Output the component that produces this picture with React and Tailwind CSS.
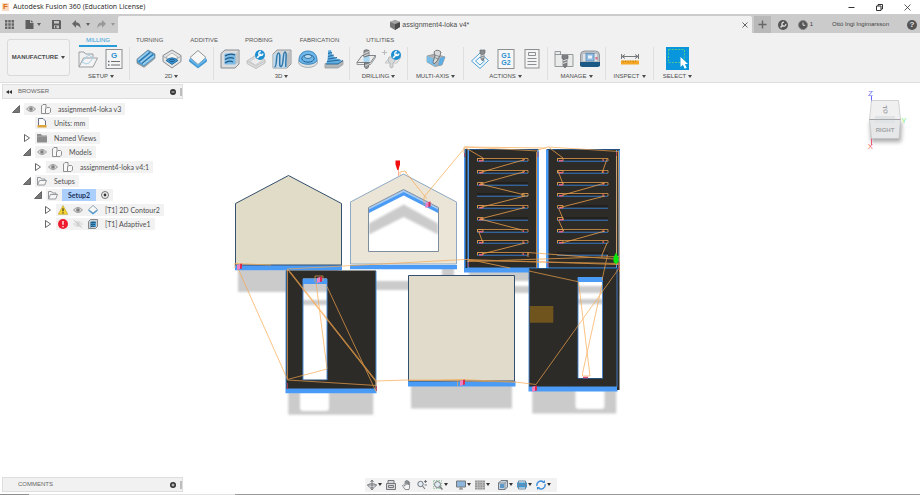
import React from "react";

const BLUE = "#4a9bf5";
const INK = "#75797d";
const ACC = "#3f97d3";

function Svg({ size = 20, box = 20, className = "", children }) {
  return (
    <svg width={size} height={size} viewBox={`0 0 ${box} ${box}`} fill="none" className={`shrink-0 ${className}`} aria-hidden="true">
      {children}
    </svg>
  );
}

function Caret() {
  return (
    <svg width="4" height="3" viewBox="0 0 4 3" className="shrink-0" aria-hidden="true">
      <path d="M0 0h4L2 3z" fill="currentColor" />
    </svg>
  );
}

/* ---------- ribbon icons ---------- */

const SetupFolder = () => (
  <Svg>
    <path d="M1 18V3h5l1.500 2H15v3" stroke="#9b9fa2" strokeWidth="1" />
    <path d="M1 18L5.500 9H19.500L15 18z" fill="#f4f4f4" stroke="#9b9fa2" />
    <path d="M4 13l4-5 3-2 4 3-4 5-3 1z" stroke="#a9cfe8" />
  </Svg>
);
const GSheet = () => (
  <Svg>
    <rect x="2" y="0.500" width="16" height="19" fill="#f5f5f5" stroke="#8b8e91" />
    <text x="10" y="8.500" textAnchor="middle" fontSize="8" fontWeight="700" fontFamily="Liberation Sans, sans-serif" fill="#2e8fd0">G</text>
    <path d="M7 12.500h9M7 16h9" stroke="#6c6f72" strokeWidth="1.200" />
    <path d="M4 12.500h1.500M4 16h1.500" stroke="#6c6f72" strokeWidth="1.500" />
  </Svg>
);
const Face2D = () => (
  <Svg>
    <path d="M1 10L12 1l7 4v4L8 18l-7-4z" fill="#4a9bd2" stroke="#6d7c87" strokeWidth=".7" />
    <path d="M2 11L12.500 2.500M4.500 13.500L15.500 4.500M7 15.500L18 7" stroke="#9fd0f0" strokeWidth="1.600" />
    <path d="M1 14l7 4 11-9" stroke="#9aa0a4" strokeWidth="1.200" />
    <path d="M3 12.500L14 3.500M6 14.500L17 5.500" stroke="#1f5f90" strokeWidth=".8" />
  </Svg>
);
const Pocket2D = () => (
  <Svg>
    <path d="M10 1l9 5.500v6L10 19l-9-6.500v-6z" fill="#e3e4e5" stroke="#8a8d90" />
    <path d="M1 7l9 6 9-6" stroke="#9c9fa2" strokeWidth=".8" />
    <path d="M10 4l6 4-6 4.500L4 8z" fill="#f5f5f5" stroke="#9c9fa2" strokeWidth=".7" />
    <path d="M4 11.500q6-5.500 12 0l-6 4z" fill="#3b93d3" stroke="#1d6498" strokeWidth=".8" />
    <ellipse cx="10" cy="11.500" rx="2.500" ry="1.200" stroke="#164f7b" strokeWidth=".8" />
  </Svg>
);
const Contour2D = () => (
  <Svg>
    <path d="M1.500 10.500L10 17.500l8.500-7v2L10 19l-8.500-6.500z" fill="#3f9ddd" stroke="#2c87c6" strokeWidth=".6" />
    <path d="M10 1.500l8 7L10 15.500l-8-7z" fill="#f7f7f7" stroke="#85898c" strokeWidth=".9" />
    <path d="M2 9.500l8 7 8-7" stroke="#5eb3ea" strokeWidth="1.500" />
  </Svg>
);
const Adaptive3D = () => (
  <Svg>
    <path d="M1 4.500L5 1h14v14l-4 4H1z" fill="#dcdddf" stroke="#888c8f" />
    <rect x="4.500" y="4.500" width="11.500" height="11" rx="1" fill="#7bbbe8" />
    <path d="M5 7q5-3 10-1M5 10.500q5-3 9-1M5 14q4-3 8-1" stroke="#215b85" strokeWidth="1.200" />
    <path d="M15.500 5v10.500l3-2.500V2z" fill="#c4c6c8" />
  </Svg>
);
function Wrench({ cx, cy }) {
  return (
    <g>
      <circle cx={cx} cy={cy} r="5" fill="#1c8fd0" />
      <path d={`M${cx - 2.500} ${cy + 2.500}l3.200-3.200`} stroke="#fff" strokeWidth="1.600" strokeLinecap="round" />
      <path d={`M${cx + 2.800} ${cy - 1.500}a2 2 0 1 1 -2-2`} stroke="#fff" strokeWidth="1.300" />
    </g>
  );
}
const Pocket3D = () => (
  <Svg>
    <path d="M1 12l9-6 9 5v3l-9 5.500-9-5z" fill="#dedede" stroke="#bcbec0" />
    <path d="M3.500 12.500l7-4.500 6 3.500-7 4.500z" fill="#ececec" stroke="#c3c5c7" strokeWidth=".8" />
    <path d="M1 12l9 5 9-5" stroke="#c3c5c7" />
    <Wrench cx={14} cy={6} />
  </Svg>
);
const Parallel3D = () => (
  <Svg>
    <path d="M1 5l4-4h14v14l-4 4H1z" fill="#d4d6d7" stroke="#95989b" />
    <path d="M1 5h14v14H1z" fill="#b9daf1" opacity=".7" />
    <path d="M2.500 18c3 0 1-14 4-14s-.5 14 2.500 13.500S10.500 3 13 3s0 13 1 15" stroke="#2f78ad" strokeWidth="1.500" />
    <path d="M15 5l3.500-3.500v13L15 18z" fill="#bcbfc1" />
  </Svg>
);
const Scallop3D = () => (
  <Svg>
    <ellipse cx="10" cy="13" rx="9.500" ry="5.500" fill="#dfe1e2" stroke="#9fa3a6" strokeWidth=".8" />
    <path d="M1 11.500C1 5 5 2 10 2s9 3 9 9.500c-2 5-16 5-18 0z" fill="#6fb7ea" stroke="#2f7fb6" strokeWidth=".9" />
    <ellipse cx="10" cy="9.500" rx="6.200" ry="3.700" stroke="#205f8d" strokeWidth="1" />
    <ellipse cx="10" cy="7.500" rx="3.600" ry="2" fill="#b9dcf3" stroke="#205f8d" strokeWidth=".8" />
  </Svg>
);
const Contour3D = () => (
  <Svg>
    <path d="M1 14.500h13l5-3v4l-5 3.500H1z" fill="#b5b8ba" stroke="#8f9396" strokeWidth=".7" />
    <path d="M4 1.500l3-.5c1 6 4 9 11 10l-4 4H2C4 11 4 6 4 1.500z" fill="#5daee5" />
    <path d="M4 4.500l4-1M4 7.500l6-1.500M4 10l9-1.500M3 12.500l13-1.500M2 15h12l5-3.500" stroke="#245f8b" strokeWidth=".9" />
  </Svg>
);
const DrillIcon = () => (
  <Svg>
    <path d="M1 13.500L6 6.500h13.500l-5 7z" fill="#ececec" stroke="#7f8386" />
    <path d="M1 13.500v2h13.500l5-7v-2" stroke="#7f8386" strokeWidth=".8" />
    <rect x="7.500" y="7" width="6" height="6" fill="#a7d5f2" />
    <path d="M8 1.500q2.500-1.500 5 0v5l-5 1.500zM8.500 14h4.500l-.5 4-2 2-2-2z" fill="#8f9395" stroke="#5f6366" strokeWidth=".8" />
    <path d="M8 4.500l5-2M8 7l5-2M9 17l4-2" stroke="#d9dadb" />
  </Svg>
);
const DrillProbe = () => (
  <Svg>
    <path d="M3 14L8 8h11l-4 6z" fill="#e5e6e6" stroke="#c3c5c6" />
    <path d="M7 8l6 1v3l-2 2v4l-2 1-1-1v-4l-2-2z" fill="#d6d7d8" stroke="#b8babc" />
    <path d="M2.500 1v5M0 3.500h5" stroke="#b8bbbd" />
    <Wrench cx={14} cy={6} />
  </Svg>
);
const MultiAxis = () => (
  <Svg>
    <path d="M1 7l8-2 10 3-3 8-7 1.500L1 13z" fill="#aeb2b5" stroke="#84888b" strokeWidth=".7" />
    <path d="M1 7l7 3 2 7.500L1 13z" fill="#76bdec" />
    <path d="M14 9l5-1.500-3 8-4 1z" fill="#5caee6" />
    <path d="M8 3q3-3.500 7 0l-1 3.500L11 12l-3 3-1-2 2-6z" fill="#d9dadb" stroke="#6b6e71" strokeWidth=".9" />
    <path d="M8.500 6l5 1.500M8.500 8.500l4 1.500" stroke="#75797b" strokeWidth=".8" />
  </Svg>
);
const Simulate = () => (
  <Svg>
    <path d="M1.500 12L10 4l8.500 7.500-8.500 8z" fill="#f2f8fc" stroke="#4f9fd2" />
    <path d="M5.500 12L10 8l4.500 4-4.500 4z" stroke="#4f9fd2" />
    <path d="M10 1h5v3l-1 1v5l-1.500 2L11 10V5l-1-1z" fill="#898d90" stroke="#6a6d70" strokeWidth=".7" />
    <path d="M11 7l3-1M11 9l3-1" stroke="#ddd" strokeWidth=".8" />
  </Svg>
);
const PostProcess = () => (
  <Svg>
    <rect x="2" y=".5" width="16" height="19" fill="#f7f7f7" stroke="#8c8f92" />
    <text x="10" y="9" textAnchor="middle" fontSize="7" fontWeight="700" fontFamily="Liberation Sans, sans-serif" fill="#2e8fd0">G1</text>
    <text x="10" y="16" textAnchor="middle" fontSize="7" fontWeight="700" fontFamily="Liberation Sans, sans-serif" fill="#2e8fd0">G2</text>
  </Svg>
);
const SetupSheet = () => (
  <Svg>
    <rect x="3" y=".5" width="14" height="18.500" fill="#f4f4f4" stroke="#8c8f92" />
    <path d="M6.500 3.500h7v3h-7zM5.500 9.500h9M5.500 12.500h9M5.500 15.500h9" stroke="#8c8f92" />
  </Svg>
);
const ToolLibrary = () => (
  <Svg>
    <path d="M1 17.500v-15h5.500v3H19v12z" fill="#e9eaea" stroke="#95989b" />
    <path d="M1 5.500h6" stroke="#95989b" />
    <path d="M8 6.500h6v3H13v7l-2 2.500-2-2.500v-7H8z" fill="#7b7f82" stroke="#65696b" strokeWidth=".7" />
    <path d="M9 12l4-1.500M9 14.500l4-1.500" stroke="#e4e4e4" />
  </Svg>
);
const Machine = () => (
  <Svg>
    <path d="M.500 14V6q0-4 4-4h11q4 0 4 4v8z" fill="#b9bfc5" stroke="#93999e" />
    <path d="M3 5h14v7H3z" fill="#dfe3e6" />
    <rect x="6" y="4.500" width="8" height="7.500" fill="#8fbbe2" stroke="#5b8ab3" strokeWidth=".8" />
    <rect x="8" y="6.500" width="4" height="3" fill="#e9f2fa" />
    <path d="M15.500 8h2v2.500h-2z" fill="#d66b83" />
    <path d="M0 13h20v4l-2 1H2l-2-1z" fill="#1c5885" />
  </Svg>
);
const Measure = () => (
  <Svg>
    <path d="M1.500 5v5M18.500 5v5M2 7.500h16M5 5.500L2 7.500l3 2M15 5.500l3 2-3 2" stroke="#75797c" />
    <path d="M1 11.500h18v4H1z" fill="#f5a623" />
    <path d="M3 11.500v2M5.500 11.500v1.500M8 11.500v2M10.500 11.500v1.500M13 11.500v2M15.500 11.500v1.500" stroke="#b8780f" strokeWidth=".7" />
  </Svg>
);
const SelectIcon = () => (
  <svg width="23" height="23" viewBox="0 0 23 23" fill="none" className="shrink-0" aria-hidden="true">
    <path d="M0 0h23v23H0z" fill="#0a96dc" />
    <rect x="2.500" y="2.500" width="16" height="13" stroke="#54c98b" strokeDasharray="2 1.300" />
    <path d="M14.500 10v10l2.400-2.200 1.800 4 2-1-1.800-3.800H22z" fill="#fff" />
  </svg>
);

const GROUPS = [
  { label: "SETUP", width: "w-14", icons: [SetupFolder, GSheet] },
  { label: "2D", width: "w-21", icons: [Face2D, Pocket2D, Contour2D] },
  { label: "3D", width: "w-34", icons: [Adaptive3D, Pocket3D, Parallel3D, Scallop3D, Contour3D] },
  { label: "DRILLING", width: "w-[58px]", icons: [DrillIcon, DrillProbe] },
  { label: "MULTI-AXIS", width: "w-14", icons: [MultiAxis] },
  { label: "ACTIONS", width: "w-21", icons: [Simulate, PostProcess, SetupSheet] },
  { label: "MANAGE", width: "w-[58px]", icons: [ToolLibrary, Machine] },
  { label: "INSPECT", width: "w-12", icons: [Measure] },
  { label: "SELECT", width: "w-12", icons: [SelectIcon] },
];
const TABS = ["TURNING", "ADDITIVE", "PROBING", "FABRICATION", "UTILITIES"];

function Ribbon() {
  return (
    <div className="flex shrink-0 border-b border-[#dedede] bg-[#f1f1f1] pl-[7px]">
      <button className="my-[6px] flex h-[37px] w-[63px] shrink-0 items-center justify-center gap-[3px] rounded-[3px] border border-[#d9d9d9] bg-[#f3f3f3] text-[6px] font-bold text-[#4a4a4a]">
        MANUFACTURE <Caret />
      </button>
      <div className="ml-[3px]">
        <div className="flex h-[14px] items-start gap-[27px] pl-[6px] text-[6px] leading-[10px] text-[#585858]">
          <button className="-mr-2 border-b-2 border-[#2a9bd9] px-[7px] pt-[2px] text-[#2a9bd9]">MILLING</button>
          {TABS.map((t) => (
            <button key={t} className="pt-[2px]">{t}</button>
          ))}
        </div>
        <div className="flex h-[35px] items-center pb-[2px]">
          {GROUPS.map((g, i) => (
            <div key={g.label} className={`${g.width} flex h-[33px] flex-col items-center justify-between ${i ? "border-l border-[#dfdfdf]" : ""}`}>
              <div className="flex h-[23px] items-center gap-[6px]">
                {g.icons.map((Icon, k) => (
                  <button key={k} aria-label={`${g.label} ${k + 1}`}><Icon /></button>
                ))}
              </div>
              <button className="flex items-center gap-[2px] text-[6px] leading-[8px] text-[#4d4d4d]">
                {g.label} <Caret />
              </button>
            </div>
          ))}
        </div>
      </div>
    </div>
  );
}

/* ---------- window chrome ---------- */

function TitleBar() {
  return (
    <header className="flex h-[14px] shrink-0 items-center bg-white pr-[9px] pl-[2px]">
      <span className="flex h-2 w-[7px] items-center justify-center bg-[#fbdcc0] text-[8px] leading-[8px] font-bold text-[#dd6b14]">F</span>
      <h1 className="ml-1 font-['Open_Sans',sans-serif] text-[7px] leading-[12px] text-[#222]">Autodesk Fusion 360 (Education License)</h1>
      <div className="ml-auto flex items-center gap-[21px] text-[#333]">
        <button aria-label="Minimize"><Svg size={7} box={7}><path d="M.5 3.500h6" stroke="currentColor" /></Svg></button>
        <button aria-label="Restore"><Svg size={7} box={7}><path d="M.5 2h4.500v4.500H.5zM2 2V.5h4.500V5H5" stroke="currentColor" /></Svg></button>
        <button aria-label="Close"><Svg size={7} box={7}><path d="M.5.5l6 6M6.500.5l-6 6" stroke="currentColor" strokeWidth=".8" /></Svg></button>
      </div>
    </header>
  );
}

function DocBar() {
  return (
    <div className="flex h-[19px] shrink-0 items-stretch bg-[#cbcbcb] pt-[2px] text-[#606060]">
      <div className="flex w-[118px] shrink-0 items-center pl-[5px]">
        <button aria-label="Data panel">
          <Svg size={9} box={9}><path d="M0 0h2.400v2.400H0zM3.300 0h2.400v2.400H3.300zM6.600 0H9v2.400H6.600zM0 3.300h2.400v2.400H0zM3.300 3.300h2.400v2.400H3.300zM6.600 3.300H9v2.400H6.600zM0 6.600h2.400V9H0zM3.300 6.600h2.400V9H3.300zM6.600 6.600H9V9H6.600z" fill="#666" /></Svg>
        </button>
        <button aria-label="File" className="ml-[11px] flex items-center gap-[3px]">
          <Svg size={9} box={9}><path d="M.5 0H5v3h3.500v6h-8zM5.800 0l2.700 2.300H5.800z" fill="#5e5e5e" /></Svg><Caret />
        </button>
        <button aria-label="Save" className="ml-[11px]">
          <Svg size={9} box={9}><path d="M0 0h8l1 1v8H0z" fill="#5e5e5e" /><path d="M2 1h5v2.500H2zM2 5.500h5v2.800H2z" fill="#c5c5c5" /><path d="M3 6h1.500v2.300H3z" fill="#5e5e5e" /></Svg>
        </button>
        <button aria-label="Undo" className="ml-[11px] flex items-center gap-[5px]">
          <Svg size={9} box={9}><path d="M4 0v2.300c3 .2 4.700 2 4.500 6.200C7.500 6 6.500 5.300 4 5.300v2.400L0 3.800z" fill="#666" /></Svg><Caret />
        </button>
        <button aria-label="Redo" className="ml-[7px] flex items-center gap-[5px] text-[#999]">
          <Svg size={9} box={9}><path d="M5 0v2.300C2 2.500.3 4.300.5 8.500 1.500 6 2.500 5.300 5 5.300v2.400l4-3.900z" fill="#999" /></Svg><Caret />
        </button>
      </div>
      <div className="flex min-w-0 flex-1 items-center rounded-t-[2px] bg-[#f1f1f1] pr-1">
        <button className="flex flex-1 items-center justify-center gap-[2px] text-[7px] leading-[12px] text-[#505050]">
          <Svg size={10} box={10}><path d="M0 2l5-2 5 2v5L5 10 0 7z" fill="#777" /><path d="M5 4l5-2v5l-5 3z" fill="#4b4b4b" /><path d="M0 2l5-2 5 2-5 2z" fill="#a7a7a7" /></Svg>
          assignment4-loka v4*
        </button>
        <button aria-label="Close tab"><Svg size={6} box={6}><path d="M.5.5l5 5M5.500.5l-5 5" stroke="#555" strokeWidth=".9" /></Svg></button>
      </div>
      <button aria-label="New tab" className="ml-[2px] flex w-[17px] items-center justify-center bg-[#b9b9b9]">
        <Svg size={9} box={9}><path d="M4.500.5v8M.5 4.500h8" stroke="#666" strokeWidth="1.400" /></Svg>
      </button>
      <div className="flex items-center pr-[3px] pl-[7px]">
        <button aria-label="Extensions">
          <Svg size={10} box={10}><circle cx="5" cy="5" r="5" fill="#555" /><path d="M2.500 7.500L5 5" stroke="#ddd" strokeWidth="1.500" /><path d="M7.800 3.800A2 2 0 1 1 6 2.200" stroke="#ddd" strokeWidth="1.200" /></Svg>
        </button>
        <button className="ml-[10px] flex items-center gap-[2px] text-[6px] text-[#444]">
          <Svg size={10} box={10}><circle cx="5" cy="5" r="4.500" fill="#555" stroke="#888" /><path d="M5 2.500V5.300h2.300" stroke="#ddd" /></Svg>1
        </button>
        <button className="ml-[19px] text-[6px] text-[#444]">Ottó Ingi Ingimarsson</button>
        <button aria-label="Help" className="ml-[18px] flex size-[10px] items-center justify-center rounded-full bg-[#555] text-[8px] leading-[10px] font-bold text-[#e4e4e4]">?</button>
      </div>
    </div>
  );
}

/* ---------- browser tree ---------- */

const Eye = ({ off }) => (
  <Svg size={10} box={10} className={off ? "opacity-30" : ""}>
    <path d="M.5 5Q5 0 9.500 5 5 10 .5 5z" fill="#d8d8d8" stroke="#9a9a9a" />
    <circle cx="5" cy="5" r="1.800" fill="#808080" />
    {off && <path d="M1 1l8 8" stroke="#777" />}
  </Svg>
);
const Body = () => (
  <Svg size={10} box={10}>
    <path d="M.5 2l1.500-1.500h3V4L4.500 9.500h-4z" fill="#f8f8f8" stroke="#777" strokeWidth=".8" />
    <path d="M4.500 5L6 3.500h2.500l1 1V8L8 9.500H4.500z" fill="#f8f8f8" stroke="#777" strokeWidth=".8" />
  </Svg>
);
const Units = () => (
  <Svg size={10} box={10}>
    <path d="M1.500 9V.5H6L8.500 3v6" fill="#fff" stroke="#69708a" />
    <path d="M.5 7h9v2.500h-9z" fill="#dca43c" />
  </Svg>
);
const SolidFolder = () => (
  <Svg size={10} box={10}><path d="M0 1h4l1 1.500h5V9.500H0z" fill="#8d8d8d" /><path d="M0 3.300h10" stroke="#bbb" strokeWidth=".6" /></Svg>
);
const OpenFolder = () => (
  <Svg size={10} box={10}>
    <path d="M.5 9V1.500h3L4.500 3H8v1.500" stroke="#8a9094" strokeWidth=".9" />
    <path d="M.5 9l2-4.500h7L7.700 9z" fill="#f7f7f7" stroke="#8a9094" strokeWidth=".9" />
  </Svg>
);
const Warn = () => (
  <Svg size={10} box={10}>
    <path d="M5 .5L9.700 9.300H.3z" fill="#f7d633" stroke="#b99a1b" strokeWidth=".6" />
    <path d="M5 3.300v3M5 7.200v1.200" stroke="#222" strokeWidth="1.100" />
  </Svg>
);
const ErrorIcon = () => (
  <Svg size={10} box={10}>
    <circle cx="5" cy="5" r="5" fill="#ee1b2e" />
    <path d="M5 2v3.800M5 6.900v1.400" stroke="#fff" strokeWidth="1.300" />
  </Svg>
);
const ContourSmall = () => (
  <Svg size={10} box={20}>
    <path d="M0 11l10 8 10-8-10-4z" fill="#3f9ddd" />
    <path d="M10 1l9 8-9 7-9-7z" fill="#f7f7f7" stroke="#6f8ea3" strokeWidth="1.500" />
  </Svg>
);
const AdaptiveSmall = () => (
  <Svg size={10} box={20}>
    <path d="M1 5l4-4h14v14l-4 4H1z" fill="#cfd2d4" stroke="#686c6f" strokeWidth="1.500" />
    <path d="M5 5h11v11H5z" fill="#4d9fd6" />
    <path d="M5 8q5-3 10-1M5 12q5-3 9-1M5 16q4-3 8-1" stroke="#17486e" strokeWidth="2" />
  </Svg>
);
const Toggle = ({ open }) => (
  <button aria-label={open ? "Collapse" : "Expand"} className="w-2 shrink-0">
    <Svg size={8} box={8}>
      {open ? <path d="M7.500.5v7h-7z" fill="#777" stroke="#444" strokeWidth=".7" /> : <path d="M1.500.5L6.500 4l-5 3.500z" fill="#fff" stroke="#555" strokeWidth=".9" />}
    </Svg>
  </button>
);

const ROWS = [
  { pad: "pl-[12px]", toggle: "open", icons: [<Eye />, <Body />], text: "assignment4-loka v3" },
  { pad: "pl-[23px]", icons: [<Units />], text: "Units: mm" },
  { pad: "pl-[23px]", toggle: "closed", icons: [<SolidFolder />], text: "Named Views" },
  { pad: "pl-[23px]", toggle: "open", icons: [<Eye />, <Body />], text: "Models" },
  { pad: "pl-[34px]", toggle: "closed", icons: [<Eye />, <Body />], text: "assignment4-loka v4:1" },
  { pad: "pl-[23px]", toggle: "open", icons: [<OpenFolder />], text: "Setups" },
  { pad: "pl-[34px]", toggle: "open", icons: [<OpenFolder />], text: "Setup2", active: true },
  { pad: "pl-[44px]", toggle: "closed", icons: [<Warn />, <Eye />, <ContourSmall />], text: "[T1] 2D Contour2" },
  { pad: "pl-[44px]", toggle: "closed", icons: [<ErrorIcon />, <Eye off />, <AdaptiveSmall />], text: "[T1] Adaptive1" },
];

function PanelBar({ title, arrows, plus }) {
  return (
    <div className="flex h-[15px] w-[181px] items-center border border-[#dedede] bg-[#f1f1f1] pl-[3px] text-[6px] text-[#666]">
      <span className="flex w-3">
        {arrows && <Svg size={6} box={6}><path d="M3 1v4L0 3zM6 1v4L3 3z" fill="#333" /></Svg>}
      </span>
      <h2>{title}</h2>
      <button aria-label={`${title} options`} className="ml-auto">
        <Svg size={6} box={6}><circle cx="3" cy="3" r="3" fill="#333" /><path d={plus ? "M3 1.500v3M1.500 3h3" : "M1.500 3h3"} stroke="#fff" strokeWidth=".8" /></Svg>
      </button>
      <span className="ml-1 h-2 w-[2px] border-x border-[#bdbdbd]" />
    </div>
  );
}

function Tree() {
  return (
    <ul className="mt-[4px] flex h-[127px] flex-col justify-between font-['Lato',sans-serif] text-[7px] leading-[12px] text-[#505050]">
      {ROWS.map((r) => (
        <li key={r.text} className={`flex h-3 items-center gap-1 ${r.pad}`}>
          {r.toggle ? <Toggle open={r.toggle === "open"} /> : <span className="w-2 shrink-0" />}
          <div className="flex h-3 items-center gap-[5px] bg-[#f2f2f2] pr-1 pl-[2px]">
            {r.icons.map((ic, k) => <React.Fragment key={k}>{ic}</React.Fragment>)}
            {r.active ? (
              <>
                <span className="-ml-px bg-[#aacfff] px-[6px] font-bold text-[#22355c]">{r.text}</span>
                <Svg size={8} box={8}><circle cx="4" cy="4" r="3.500" stroke="#555" strokeWidth=".8" /><circle cx="4" cy="4" r="1.400" fill="#333" /></Svg>
              </>
            ) : (
              <span className="ml-[2px]">{r.text}</span>
            )}
          </div>
        </li>
      ))}
    </ul>
  );
}

/* ---------- model view ---------- */

const ROW_Y = [161, 173, 185, 196, 208, 220, 232, 243, 255];

function SlotRows({ x, cut, partial }) {
  return (
    <g fill="none">
      {ROW_Y.map((y, i) => (
        <g key={y}>
          <path d={`M${x} ${y - 2}h51`} stroke="#201f1c" strokeWidth="1.500" />
          <path d={`M${x} ${y + 0.300}h51`} stroke="#3577c0" strokeWidth="1.100" />
          {cut.includes(i) && (
            <>
              <path d={`M${x + 0.500} ${y}v-2.500h50.500v2.500M${x + 46} ${y}v-2`} stroke="#c98c48" strokeWidth=".9" />
              <path d={`M${x + 46.500} ${y}v-1.500`} stroke="#d94b6e" strokeWidth="1.200" />
            </>
          )}
          {partial[i] === "r" && <path d={`M${x + 45} ${y}v-2.500h6v2.500z`} stroke="#d99a50" strokeWidth=".9" />}
          {(cut.includes(i) || partial[i] === "l") && (
            <>
              <path d={`M${x + 0.500} ${y}v-2.500h5.500v2.500`} stroke="#d99a50" strokeWidth=".9" />
              <path d={`M${x + 2} ${y - 0.300}h4`} stroke="#e0607f" strokeWidth="1.600" />
            </>
          )}
        </g>
      ))}
    </g>
  );
}

function Pink({ x, y }) {
  return (
    <g>
      <path d={`M${x} ${y}l3-1v5l-3 1z`} fill="#ee7fc2" />
      <path d={`M${x + 3} ${y - 1}l2-.5v5l-2 .5z`} fill="#e0294f" />
    </g>
  );
}

function Scene() {
  return (
    <svg className="absolute inset-0 h-full w-full" viewBox="0 83 920 412" preserveAspectRatio="xMidYMid meet" role="img" aria-label="Toolpaths over the nested parts">
      <defs>
        <filter id="soft" x="-5%" y="-10%" width="110%" height="120%"><feGaussianBlur stdDeviation=".8" /></filter>
      </defs>

      <g fill="#cbcbcb" filter="url(#soft)">
        <path d="M238 269h100v23H238zM442 268h12v18h-12zM358 281h96v9h-96zM469 270h150v11H469zM469 286h150v7H469z" />
        <path d="M288 300h40v5h-40zM570 299h40v5h-40z" />
        <path d="M411 385h101v23.500H411z" />
        <path fillRule="evenodd" d="M288.300 392h85v22.700h-85zM300 392v16q0 3 3 3h23q3 0 3-3v-16z" />
        <path fillRule="evenodd" d="M532.300 390h84v23.500h-84zM575.500 390v16q0 3 3 3h23q3 0 3-3v-16z" />
      </g>

      {/* closed house */}
      <path d="M235 265h107v5.300H235z" fill={BLUE} />
      <path d="M235.500 265V203.500L288.500 175.500 341.500 203.500V265z" fill="#e1dcc8" stroke="#34506e" />

      {/* house with opening */}
      <path d="M350 265h107v4.300H350z" fill={BLUE} />
      <path d="M350.500 264V202L403.500 174 456.500 202V264z" fill="#ebe5d8" stroke="#8ea9c4" />
      <path d="M368.500 251.500V207.500L403.500 189.500 438.500 207.500V251.500z" fill="#fff" />
      <path d="M369 223.500L403.700 204.500 438 223.500V234.500L403.700 217 369 234.500z" fill="#cbcbcb" filter="url(#soft)" />
      <path d="M369 208L403.700 190 438 208V213L403.700 195.500 369 213z" fill={BLUE} />
      <path d="M369 208L403.700 190 438 208V209.500L403.700 192 369 209.500z" fill="#a9cdf2" />
      <path d="M368.500 251.500V207.500L403.500 189.500 438.500 207.500V251.500z" fill="none" stroke="#7e8d9d" />

      {/* slotted panels */}
      <path d="M464 150h75v122.500h-75zM546 150h74v120h-74z" fill={BLUE} />
      <path d="M465.500 150h2v118h-2zM469 149.500h68V267.500H469zM548.500 149.500h67.500V267.500H548.500z" fill="#2c2b28" />
      <path d="M617 149.500h1.500V268H617z" fill="#3b3428" />
      <path d="M464.500 149.500h74M546.500 149.500h73.500" stroke="#24507f" />
      <SlotRows x={477} cut={[0, 1, 4, 6, 7, 8]} partial={{ 2: "l", 3: "r", 5: "l" }} />
      <SlotRows x={557} cut={[0, 1, 2, 3, 6, 7]} partial={{ 4: "l", 5: "l" }} />

      {/* lower left panel */}
      <path d="M285.500 388h91v5.300h-91z" fill={BLUE} />
      <path fillRule="evenodd" d="M286 270.500h90v118h-90zM303 278.500v101.500h24v-101.500z" fill="#2c2b28" />
      <path d="M286 271v117M376 271v117M303 279v101M327 279v101" stroke="#4a8ed8" />
      <path d="M303 278.500h24v5.500h-24z" fill={BLUE} />
      <path d="M303 380h24" stroke="#27527f" />

      {/* center plate */}
      <path d="M408 381h107.500v5.500H408z" fill={BLUE} />
      <path d="M408.500 275.500h106v105.500h-106z" fill="#e0dbcb" stroke="#34506e" />

      {/* lower right panel */}
      <path d="M528.500 386h89v5.500h-89z" fill={BLUE} />
      <path fillRule="evenodd" d="M529 268.500h90.500V390H617v-3.500h-88zM578 277v101.500h24.500V277z" fill="#2c2b28" />
      <path d="M529 269v117M617 269v118M578 277v101M602.500 277v101" stroke="#4585cc" strokeWidth=".9" />
      <path d="M529 268.500h90" stroke="#24507f" />
      <path d="M578 277h24.500v5H578z" fill={BLUE} />
      <path d="M578 378.500h24.500" stroke="#27527f" />
      <path d="M529.700 306h23.600v16.700h-23.600z" fill="#70541d" />

      {/* rapid moves */}
      <g fill="none" stroke="#f7a64b" strokeWidth=".9" opacity=".75">
        <path d="M235 263.500l36 1.500M235 263v5M238 268.500L287.500 379.500M287.500 269L465 259.500M405 171.500L427 199M400 175v-3l5-1 2 2M424 205v-8L465.500 147l73 4M464 153.500V147l82 1M538 150l10-3 71 4.500" />
        <path d="M465 147.500L483 158v3M480 172.500L525 159.500M480 184L525 171.500M480 184L525 195M480 207.500L525 196M480 219L525 207.500M480 219L522 230M478.500 231L483 243M482 254L525 243" strokeWidth="1" />
        <path d="M549 147.500L563 158M607 159l-5 14M558 171l5 13M563 195L605 183M560 207.500L605 196M558.500 208l5 12M558.500 220l5 11M562 243L605 231M607 243l-5 12v2" strokeWidth="1" />
        <path d="M465 259.500l154 5M467 261.500l152-5M468 260.500l152 3M528 257v-4.500l92 7M467 259l43 9M616.500 152v110M618.500 152l1 120M536.500 152v116" strokeWidth="1" />
        <path d="M287.500 269V380l89 5.500M287.500 269L376 381.500M290 271.500L376 380.500v11L327 286.500M287.500 379.500L327 369 316 282M315 282v-6h8v5M376 381l32-1 107 2" />
        <path d="M408 380.500l54-1 53 2.500 21 2.500L618.500 269M529 271l49 10.700M578.500 281.500L590 376h-7.500v-2.500L602 285M607.500 255L602 280M457.500 380v6" />
        <path d="M289 271.500L377 383" />
      </g>
      <path d="M464.500 153v4M538 152v5M616.500 152v4M468.500 262v5M548 262v5M287.500 383v6M376.500 386v5M619 262v8" stroke="#b83a50" strokeWidth=".8" />
      <Pink x={237} y={265} />
      <Pink x={425.500} y={203} />
      <Pink x={317} y={278} />
      <Pink x={460} y={381} />
      <Pink x={532} y={387} />
      <path d="M583 377.500h5" stroke="#e0507f" strokeWidth="1.500" />
      <path d="M398.500 168v8" stroke="#ffb199" />
      <path d="M395.500 160.500h4.500v4L398.300 170h-1L395.500 164.500z" fill="#f20d0d" />
      <path d="M616 252.500l2.500 5v4.500l-2.500 2-2.500-2v-4.500z" fill="#0be80b" />
    </svg>
  );
}

function ViewCube() {
  return (
    <svg className="absolute top-[3px] right-[12px]" width="42" height="70" viewBox="866 86 42 70" fill="none" role="img" aria-label="View cube">
      <defs>
        <filter id="cubeShadow" x="-30%" y="-30%" width="160%" height="160%"><feGaussianBlur stdDeviation="2" /></filter>
      </defs>
      <path d="M870 122h32l-1 20h-30z" fill="#aaa" filter="url(#cubeShadow)" />
      <path d="M871.500 138v7" stroke="#e57" />
      <path d="M871.500 96v6" stroke="#66f" />
      <path d="M871.500 100.500h27l2 19h-31z" fill="#f0f0f1" stroke="#bfc1c3" strokeWidth=".7" />
      <path d="M869.500 119.500h31l-1.500 19h-27.500z" fill="#e6e7e9" stroke="#bfc1c3" strokeWidth=".7" />
      <path d="M875 116h20v7h-20z" fill="#e0e3e6" />
      <path d="M869.500 119.500h31" stroke="#999" strokeWidth=".8" />
      <g fontFamily="Liberation Sans, sans-serif">
        <text x="885" y="132" fontSize="6" fontWeight="700" textAnchor="middle" fill="#a0a3a6">RIGHT</text>
        <text x="0" y="0" fontSize="6" fontWeight="700" fill="#9a9da0" transform="translate(882.500 106) rotate(80)">TO</text>
        <text x="870.500" y="96" fontSize="8" textAnchor="middle" fill="#7474f5">Z</text>
        <text x="904" y="123" fontSize="8" textAnchor="middle" fill="#7df07d">Y</text>
        <text x="870.500" y="149" fontSize="8" textAnchor="middle" fill="#f56b6b">X</text>
      </g>
    </svg>
  );
}

/* ---------- navigation bar ---------- */

const NAV = [
  { name: "Orbit", caret: true, d: <><path d="M5 0v10M0 5h10M5 0L3.500 2M5 0l1.500 2M5 10L3.500 8M5 10l1.500-2" stroke={INK} /><ellipse cx="5" cy="5.500" rx="4" ry="2" stroke={INK} strokeWidth=".8" /></> },
  { name: "Look at", gap: "ml-[4px]", d: <path d="M.5 3.500h9v6h-9zM2 3V.5h6V3M2.500 5.500h5v2h-5z" stroke={INK} fill="#d9d9d9" /> },
  { name: "Pan", gap: "ml-[6px]", d: <path d="M3 9.500L.5 5.500l1-.5 1.500 1V1.500h1V4.500 .5h1.200v4V1h1.200v4V2h1.200v5L7 9.500z" fill="#f5f5f5" stroke={INK} strokeWidth=".8" /> },
  { name: "Zoom", gap: "ml-[5px]", d: <><circle cx="3.500" cy="4" r="2.700" stroke={INK} fill="#e2edf5" /><path d="M5.500 6L8 9M7 1.500h3M8.500 0v3M7.500 5H10" stroke={INK} strokeWidth="1.100" /></> },
  { name: "Fit", gap: "ml-[6px]", caret: true, d: <><path d="M.5.5h8v8h-8z" stroke="#9fc6a9" strokeDasharray="1.500 1" /><circle cx="4.500" cy="4.500" r="3" stroke={INK} fill="#dfeaf2" /><path d="M6.500 6.500l3 3" stroke={INK} strokeWidth="1.500" /></> },
  { name: "Display settings", gap: "ml-[8px]", caret: true, d: <><path d="M.5 1h9v6h-9z" fill="#8cb6dc" stroke={INK} /><path d="M3 9h4M5 7v2" stroke={INK} /></> },
  { name: "Grid", gap: "ml-[4px]", caret: true, d: <><path d="M0 .5h10v9H0z" fill="#999" /><path d="M2.500 0v10M5 0v10M7.500 0v10M0 2.500h10M0 5h10M0 7.500h10" stroke="#c9c9c9" strokeWidth=".6" /></> },
  { name: "Viewports", gap: "ml-[8px]", caret: true, d: <><path d="M.5 3L3 .5h6.500V7L7 9.500H.5z" fill="#c5d7e6" stroke={INK} /><path d="M2 4h4v4H2z" fill="#5d97c7" /><path d="M7 3v6.500M.5 3H7l2.500-2.500" stroke={INK} strokeWidth=".7" /></> },
  { name: "Split view", gap: "ml-[4px]", caret: true, d: <><path d="M0 2.500h10v5H0z" fill={ACC} /><path d="M1.500 1h7v8h-7zM0 5h10" stroke="#6a8aa3" /></> },
  { name: "Refresh", gap: "ml-[4px]", caret: true, d: <><path d="M1 6a4 4 0 0 1 6.500-4M9 4a4 4 0 0 1-6.500 4" stroke="#3a8ddb" strokeWidth="1.400" /><path d="M6 3h3V0zM4 7H1v3z" fill="#3a8ddb" /></> },
];

function NavBar() {
  return (
    <nav className="flex h-[14px] items-center bg-[#f2f2f2] pr-[6px] pl-[2px] text-[#333]">
      {NAV.map((n) => (
        <button key={n.name} aria-label={n.name} className={`flex items-center gap-px ${n.gap || ""}`}>
          <Svg size={10} box={10}>{n.d}</Svg>
          {n.caret && <Caret />}
        </button>
      ))}
    </nav>
  );
}

export default function App() {
  return (
    <div className="flex min-h-screen flex-col overflow-hidden bg-white font-['Liberation_Sans',Arial,sans-serif]">
      <TitleBar />
      <DocBar />
      <Ribbon />
      <main className="relative flex flex-1 flex-col justify-between bg-white">
        <Scene />
        <ViewCube />
        <aside className="relative pt-[1px] pl-[2px]">
          <PanelBar title="BROWSER" arrows />
          <div className="-ml-[2px]"><Tree /></div>
        </aside>
        <footer className="relative">
          <div className="grid grid-cols-[1fr_auto_1fr] items-center pb-[2px] pl-[2px]">
            <PanelBar title="COMMENTS" plus />
            <NavBar />
          </div>
          <div className="flex h-px">
            <span className="w-[29px] bg-[#8f8f8f]" />
            <span className="w-[206px] bg-[#e2e2e2]" />
            <span className="flex-1 bg-[#9a9a9a]" />
          </div>
        </footer>
      </main>
    </div>
  );
}
